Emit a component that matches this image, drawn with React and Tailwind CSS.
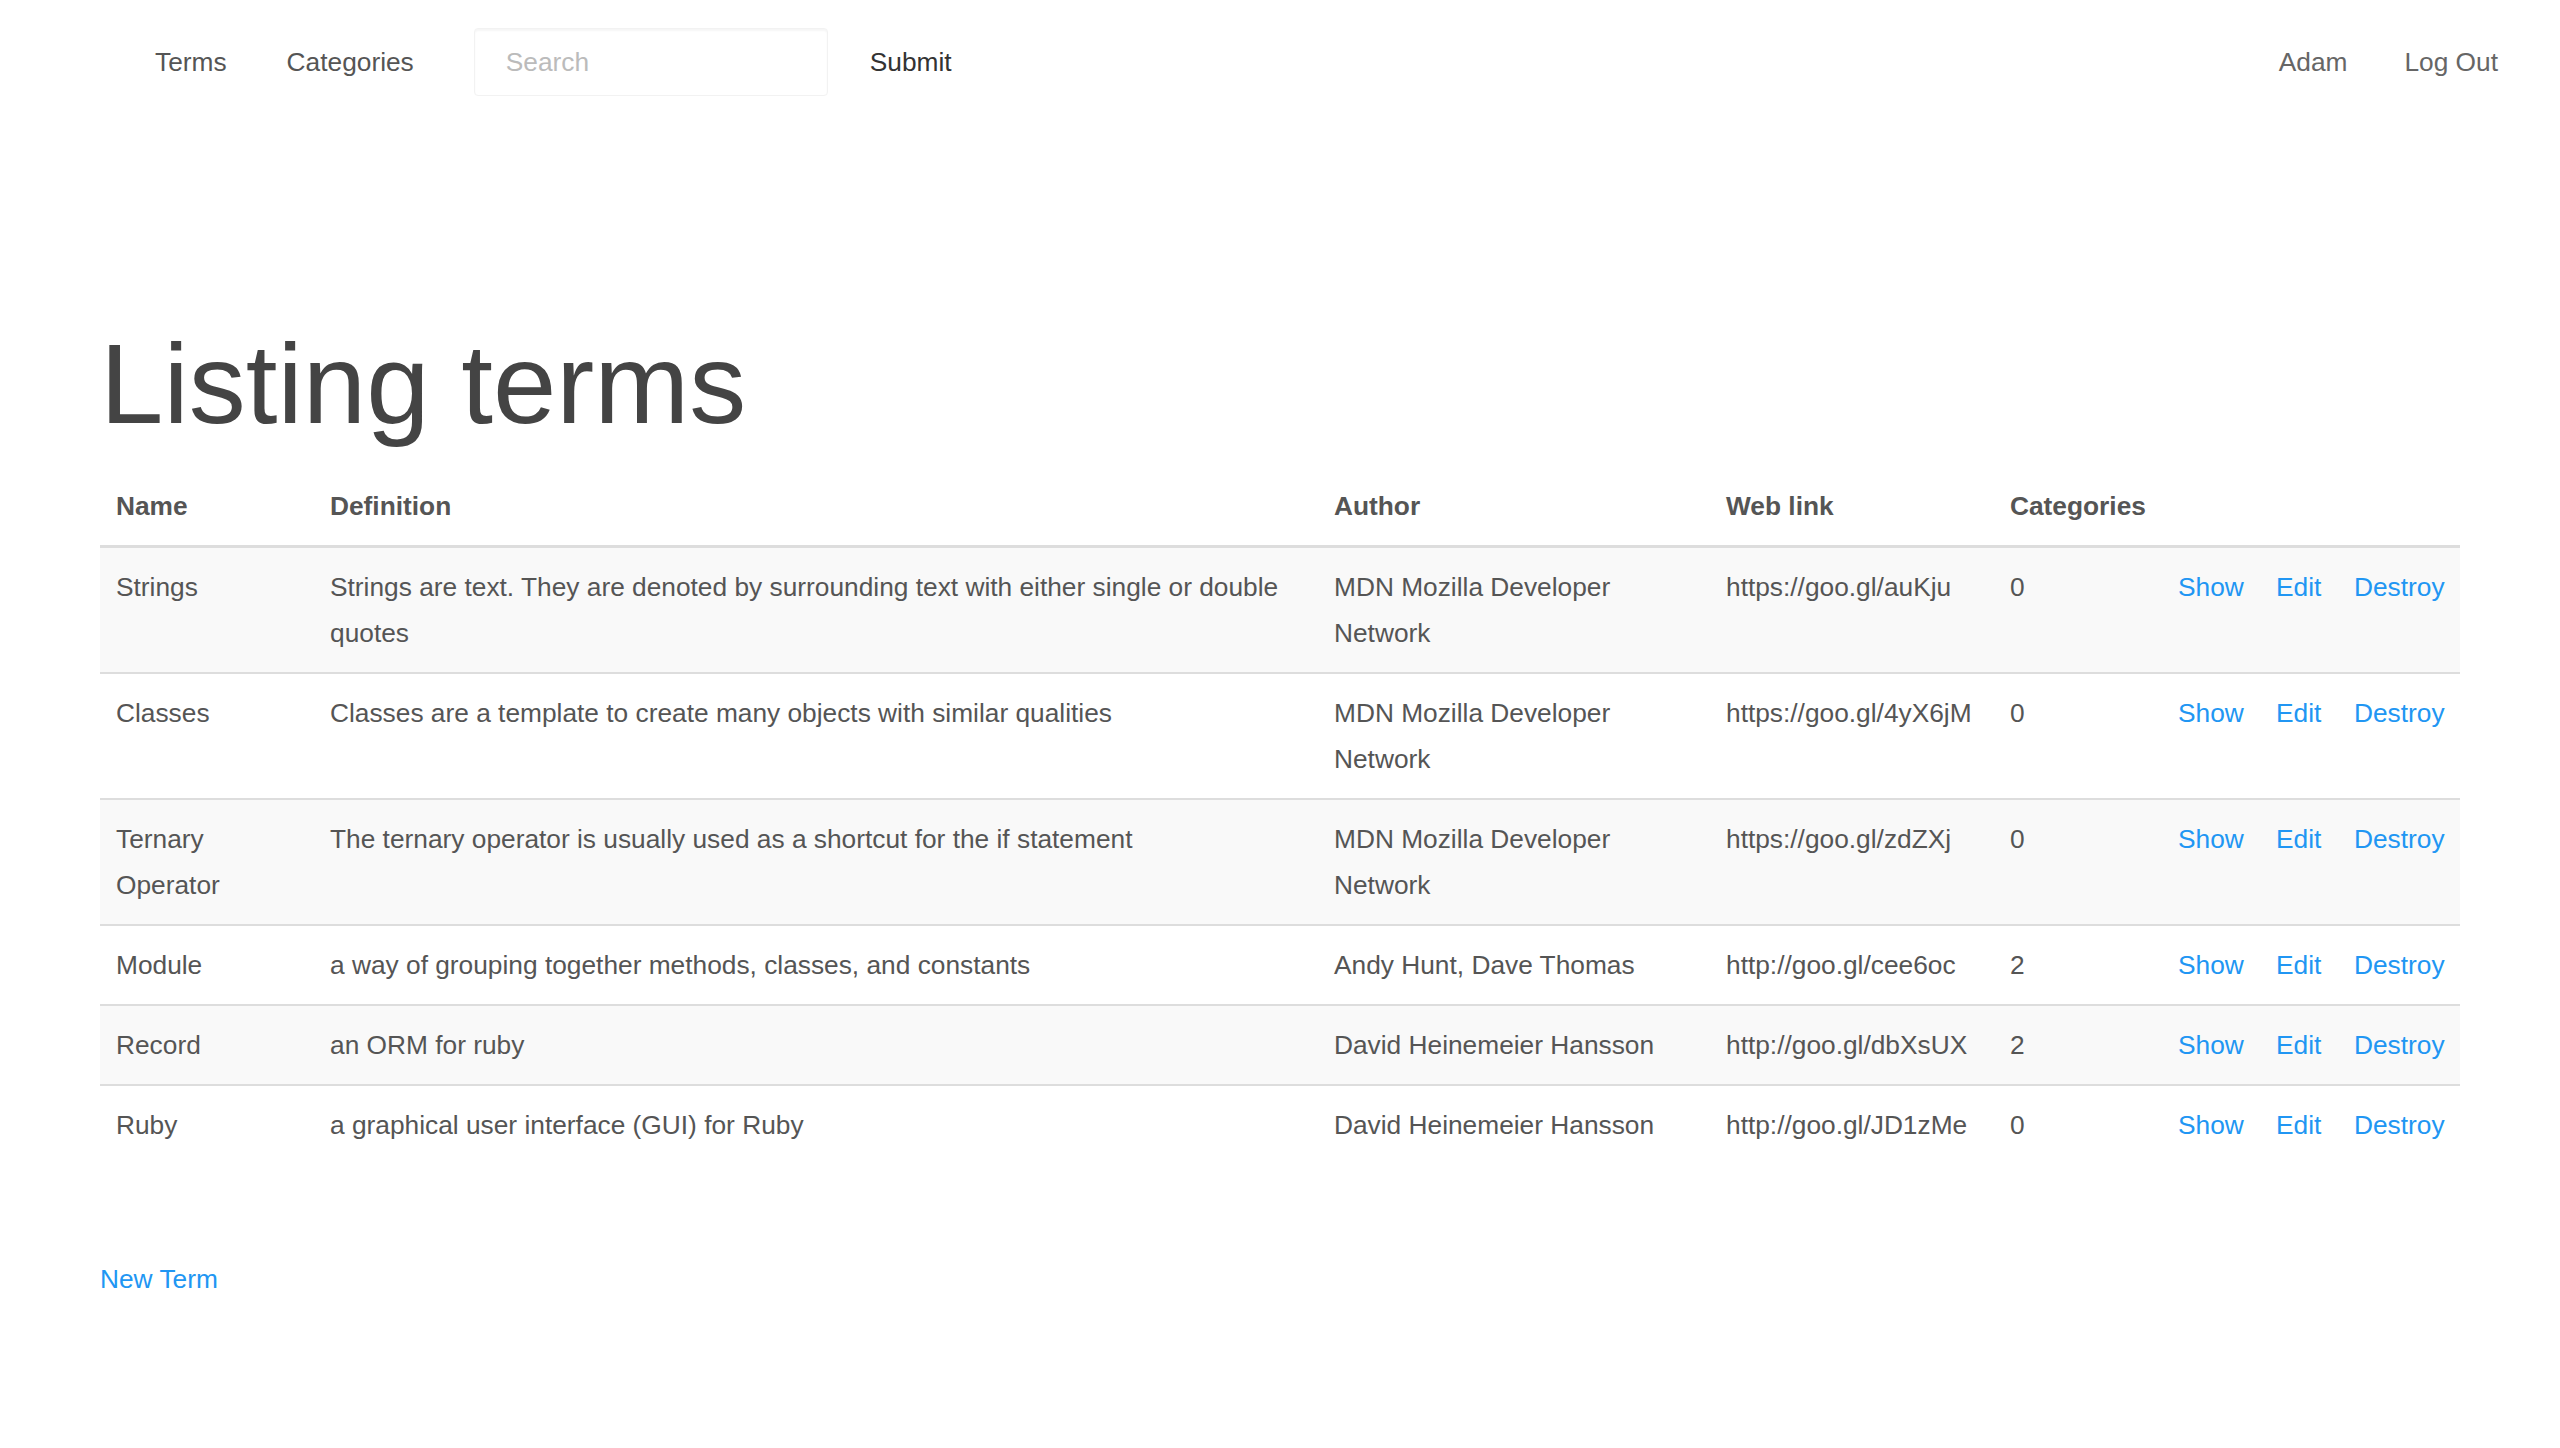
import React from 'react'

const terms = [
  {
    name: 'Strings',
    definition: 'Strings are text. They are denoted by surrounding text with either single or double quotes',
    author: 'MDN Mozilla Developer Network',
    link: 'https://goo.gl/auKju',
    categories: 0,
  },
  {
    name: 'Classes',
    definition: 'Classes are a template to create many objects with similar qualities',
    author: 'MDN Mozilla Developer Network',
    link: 'https://goo.gl/4yX6jM',
    categories: 0,
  },
  {
    name: 'Ternary Operator',
    definition: 'The ternary operator is usually used as a shortcut for the if statement',
    author: 'MDN Mozilla Developer Network',
    link: 'https://goo.gl/zdZXj',
    categories: 0,
  },
  {
    name: 'Module',
    definition: 'a way of grouping together methods, classes, and constants',
    author: 'Andy Hunt, Dave Thomas',
    link: 'http://goo.gl/cee6oc',
    categories: 2,
  },
  {
    name: 'Record',
    definition: 'an ORM for ruby',
    author: 'David Heinemeier Hansson',
    link: 'http://goo.gl/dbXsUX',
    categories: 2,
  },
  {
    name: 'Ruby',
    definition: 'a graphical user interface (GUI) for Ruby',
    author: 'David Heinemeier Hansson',
    link: 'http://goo.gl/JD1zMe',
    categories: 0,
  },
]

function Navbar() {
  return (
    <div className="h-[124px] flex items-center justify-between text-[26.3px] leading-[46px]">
      <div className="flex items-center">
        <a className="ml-[155px] text-[#555]">Terms</a>
        <a className="ml-[60px] text-[#555]">Categories</a>
        <input
          placeholder="Search"
          className="ml-[60px] w-[354px] h-[68px] px-[31px] border border-[#f2f2f2] rounded-[4px] shadow-[inset_0_2px_2px_rgba(0,0,0,0.04)] text-[26.3px] text-[#555] placeholder:text-[#bbb] outline-none"
        />
        <button className="ml-[42px] text-[#333]">Submit</button>
      </div>
      <div className="flex items-center mr-[62px]">
        <a className="text-[#666]">Adam</a>
        <a className="ml-[57px] text-[#666]">Log Out</a>
      </div>
    </div>
  )
}

export default function App() {
  return (
    <div className="min-h-screen bg-white text-[#555]" style={{ fontFamily: '"Liberation Sans", Arial, Helvetica, sans-serif' }}>
      <Navbar />

      <div className="px-[100px]">
        <h1 className="mt-[198px] text-[114px] leading-[123px] text-[#444] font-normal">Listing terms</h1>

        {/* Terms table */}
        <table className="mt-[22px] w-[2360px] table-fixed text-[26.3px] leading-[46px]">
          <colgroup>
            <col className="w-[214px]" />
            <col className="w-[1004px]" />
            <col className="w-[392px]" />
            <col className="w-[284px]" />
            <col className="w-[168px]" />
            <col className="w-[98px]" />
            <col className="w-[78px]" />
            <col className="w-[122px]" />
          </colgroup>
          <thead>
            <tr className="border-b-[3px] border-[#ddd] text-left">
              <th className="px-4 py-4 font-bold text-[#555]">Name</th>
              <th className="px-4 py-4 font-bold text-[#555]">Definition</th>
              <th className="px-4 py-4 font-bold text-[#555]">Author</th>
              <th className="px-4 py-4 font-bold text-[#555]">Web link</th>
              <th className="px-4 py-4 font-bold text-[#555]">Categories</th>
              <th colSpan={3}></th>
            </tr>
          </thead>
          <tbody>
            {terms.map((t, i) => (
              <tr key={t.name} className={`${i > 0 ? 'border-t-2 border-[#ddd]' : ''} ${i % 2 === 0 ? 'bg-[#f9f9f9]' : 'bg-white'} align-top`}>
                <td className="px-4 py-4">{t.name}</td>
                <td className="px-4 py-4">{t.definition}</td>
                <td className="px-4 py-4">{t.author}</td>
                <td className="px-4 py-4 whitespace-nowrap">{t.link}</td>
                <td className="px-4 py-4">{t.categories}</td>
                <td className="px-4 py-4 text-[#2196f3]"><a>Show</a></td>
                <td className="px-4 py-4 text-[#2196f3]"><a>Edit</a></td>
                <td className="px-4 py-4 text-[#2196f3]"><a>Destroy</a></td>
              </tr>
            ))}
          </tbody>
        </table>

        <div className="mt-[92px] text-[26.3px] leading-[46px]">
          <a className="text-[#2196f3]">New Term</a>
        </div>
      </div>
    </div>
  )
}
